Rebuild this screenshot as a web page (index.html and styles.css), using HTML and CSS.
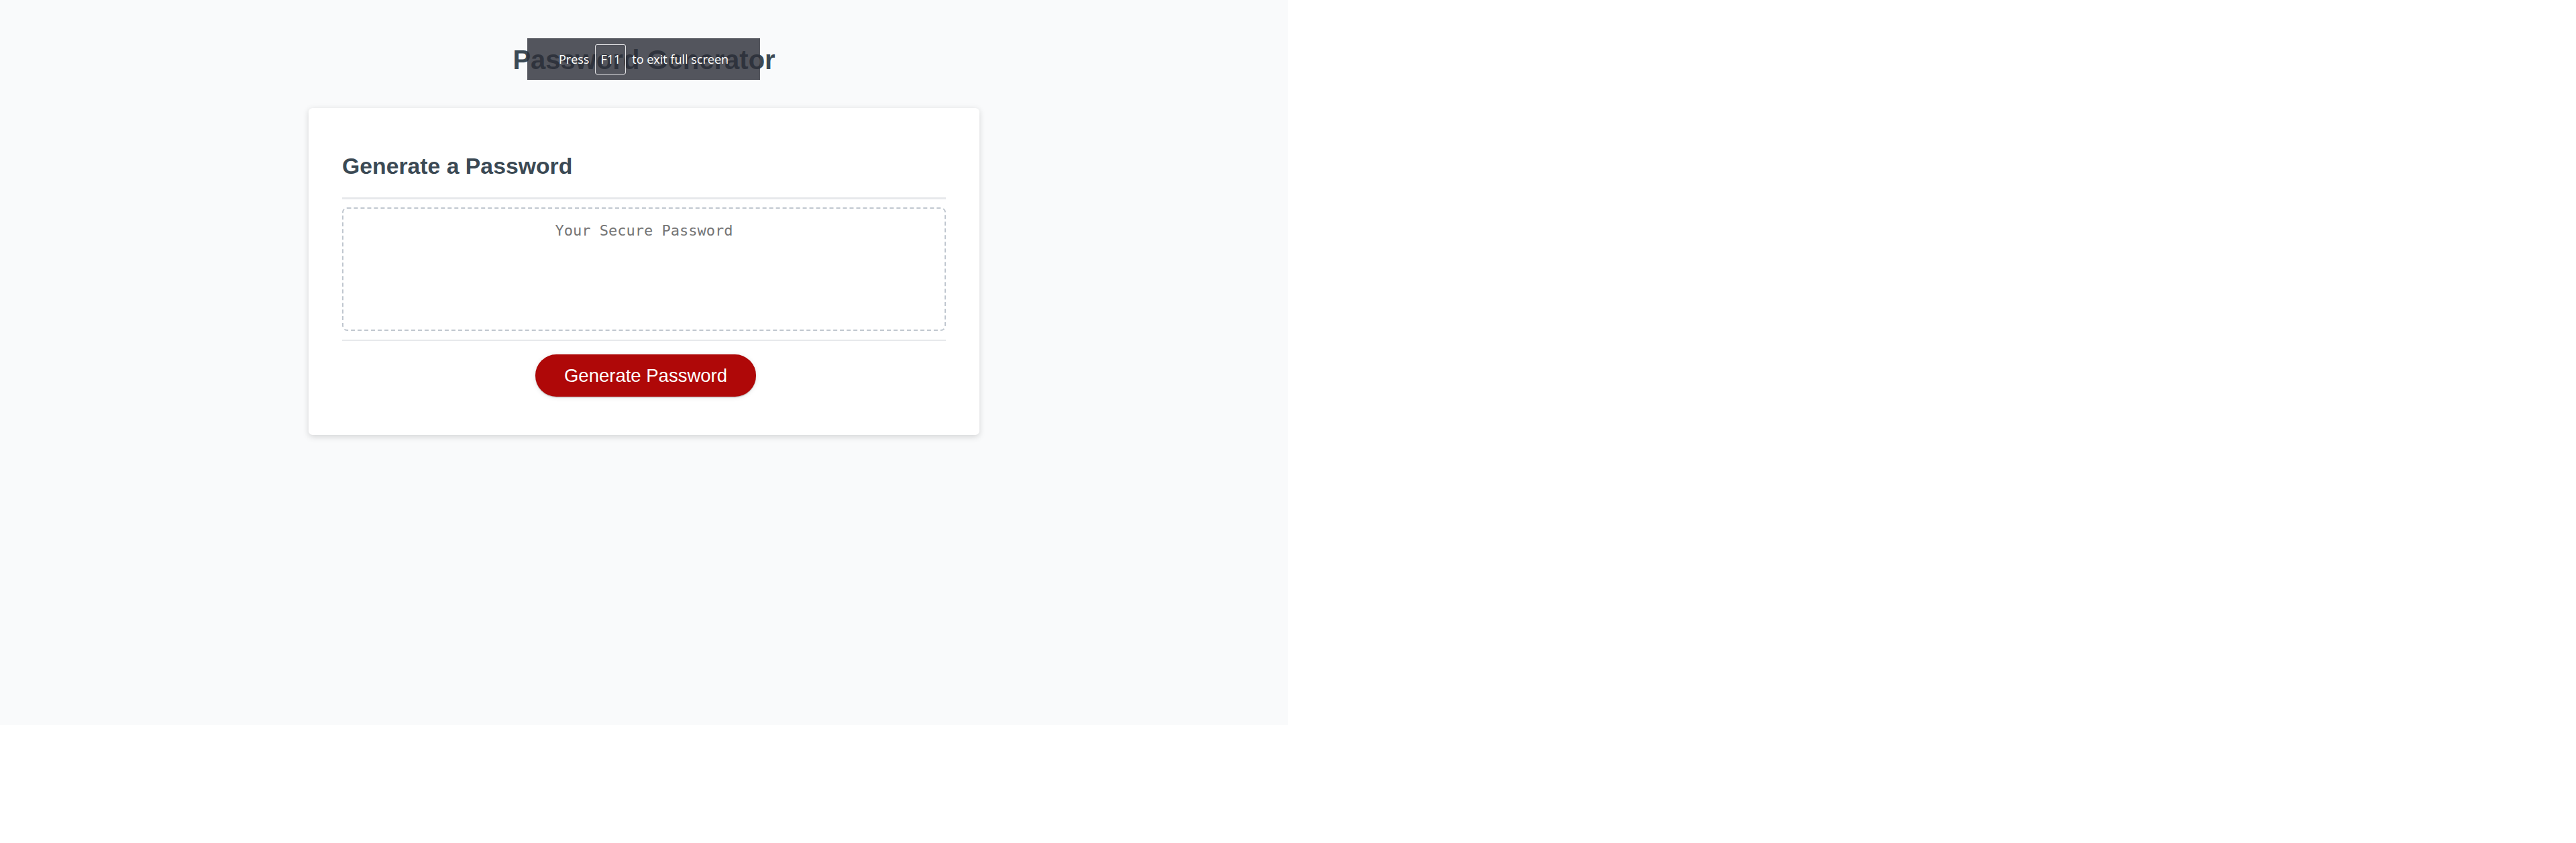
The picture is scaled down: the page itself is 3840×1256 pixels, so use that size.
FILE: index.html
```html
<!DOCTYPE html>
<html lang="en">
<head>
<meta charset="UTF-8">
<title>Password Generator</title>
<link rel="stylesheet" href="styles.css">
</head>
<body>
<div class="screen">
  <div class="wrapper">
    <header class="header"><h1 class="title">Password Generator</h1></header>
    <div class="card">
      <div class="card-header"><h2 class="card-title">Generate a Password</h2></div>
      <div class="card-body"><textarea readonly class="password" placeholder="Your Secure Password"></textarea></div>
      <div class="card-footer">
        <div class="actions"><button class="btn">Generate Password</button></div>
      </div>
    </div>
  </div>
  <div class="fs-bubble"><span>Press</span><span class="key">F11</span><span>to exit full screen</span></div>
</div>
</body>
</html>
```

FILE: styles.css
```css
html, body {
  margin: 0;
  padding: 0;
  background: #ffffff;
}

.screen {
  position: relative;
  width: 1920px;
  height: 1080px;
  background: #f9fafb;
  font-family: "Liberation Sans", Arial, sans-serif;
  overflow: hidden;
}

.wrapper {
  padding-top: 66px;
}

.title {
  margin: 0;
  text-align: center;
  font-size: 40px;
  line-height: 46px;
  font-weight: bold;
  color: #3b4954;
}

.card {
  box-sizing: border-box;
  width: 1000px;
  margin: 49px auto 0;
  padding: 37.5px 50px 57.5px;
  background: #ffffff;
  border-radius: 6px;
  box-shadow: 0 2.5px 10px rgba(0, 0, 0, 0.15);
  color: #3b4954;
  font-size: 22.5px;
}

.card-title {
  margin: 29px 0 28.5px;
  font-size: 33.75px;
  line-height: 38px;
  font-weight: bold;
}

.card-header::after,
.card-footer::before {
  content: "";
  display: block;
  height: 2.5px;
  background: #e7e9eb;
}

.password {
  display: block;
  box-sizing: border-box;
  width: 100%;
  height: 184px;
  margin: 12.5px 0;
  padding: 20px 18.75px 0;
  border: 2.5px dashed #c0c7cf;
  border-radius: 7.5px;
  background: #ffffff;
  font-family: "DejaVu Sans Mono", monospace;
  font-size: 22px;
  text-align: center;
  resize: none;
  overflow: hidden;
  outline: none;
}

.password::placeholder {
  color: #757575;
}

.actions {
  display: flex;
  justify-content: center;
  padding-top: 20px;
}

.btn {
  margin: 0 0 0 5px;
  padding: 17.5px 42.5px;
  border: none;
  border-radius: 31.25px;
  background: #af0808;
  color: #ffffff;
  font-family: "Liberation Sans", Arial, sans-serif;
  font-size: 27.5px;
  line-height: 27.5px;
  box-shadow: 0 1.25px 7.5px rgba(0, 0, 0, 0.1), 0 1.25px 1.25px rgba(0, 0, 0, 0.2);
  cursor: pointer;
}

.fs-bubble {
  position: absolute;
  left: 786px;
  top: 57px;
  width: 347px;
  height: 62px;
  display: flex;
  align-items: center;
  justify-content: center;
  gap: 9px;
  background: rgba(44, 47, 55, 0.81);
  color: #ffffff;
  font-family: "Open Sans", "Noto Sans", sans-serif;
  font-size: 18px;
}

.key {
  display: flex;
  align-items: center;
  height: 43px;
  padding: 0 7px;
  border: 1px solid rgba(255, 255, 255, 0.85);
  border-radius: 3px;
}
```
